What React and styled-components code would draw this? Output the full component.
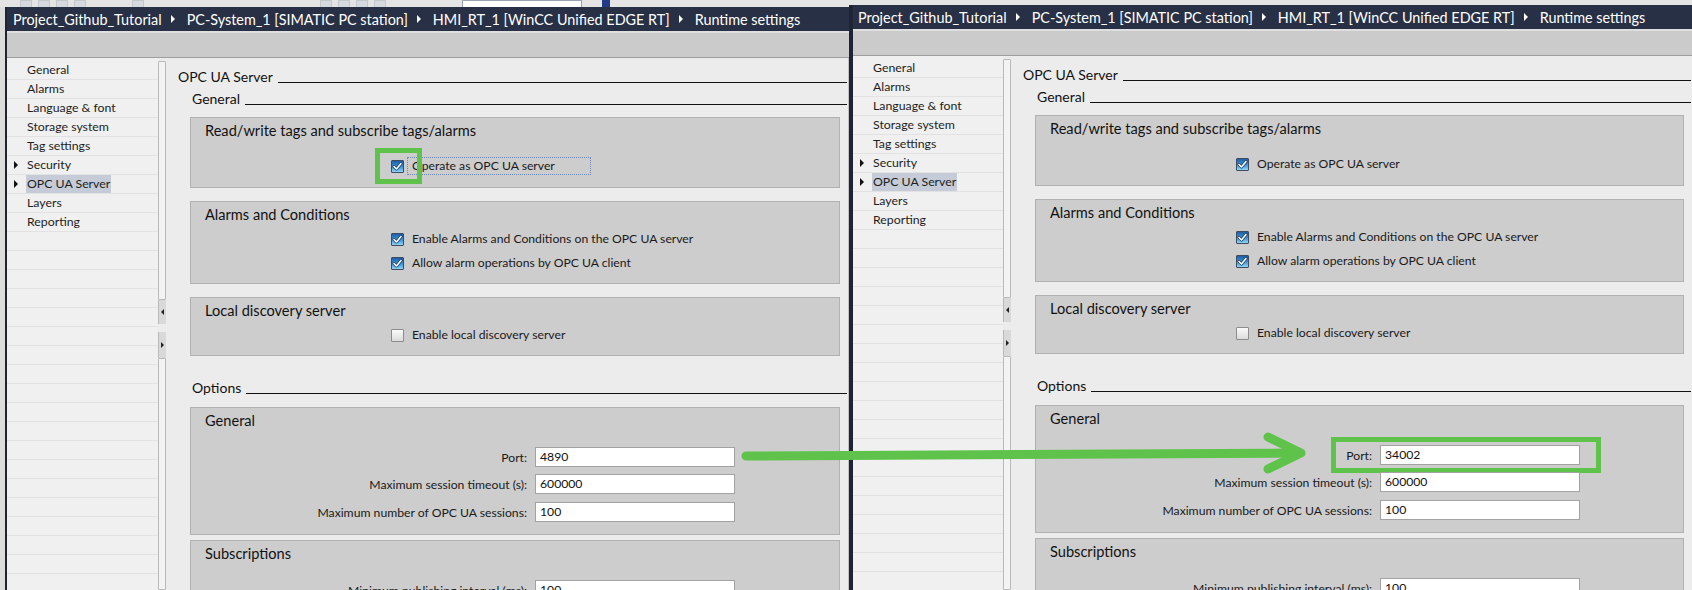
import React from "react";
import styled, { createGlobalStyle } from "styled-components";

const GlobalStyle = createGlobalStyle`
  html, body { margin: 0; padding: 0; }
  body { font-family: "Lato", "Noto Sans", sans-serif; background: #e2e2e2; }
`;

const FONT = `"Lato", "Noto Sans", sans-serif`;
const GREEN = "#5fc34b";

const Page = styled.div`
  position: relative;
  display: flex;
  width: 1692px;
  height: 590px;
  overflow: hidden;
  background: #dcdcdc;
  font-family: ${FONT};
`;

const Pane = styled.div`
  display: flex;
  flex-direction: column;
  width: ${(p) => (p.$w ? `${p.$w}px` : "auto")};
  flex: ${(p) => (p.$w ? "none" : "1")};
  min-width: 0;
`;

const TopStrip = styled.div`
  height: ${(p) => p.$h}px;
  background: #e4e4e4;
  display: flex;
  align-items: flex-end;
  gap: 6px;
  padding-left: ${(p) => p.$pl || 0}px;
  overflow: hidden;
`;

const ToolIcon = styled.span`
  display: block;
  width: ${(p) => p.$w || 12}px;
  height: ${(p) => p.$hh || 6}px;
  margin-left: ${(p) => p.$ml || 0}px;
  background: ${(p) => p.$bg || "#d6d9dd"};
  border: 1px solid ${(p) => p.$bd || "#c4c7cc"};
  border-bottom: none;
`;

const Window = styled.div`
  flex: 1;
  display: flex;
  flex-direction: column;
  min-height: 0;
  margin-left: ${(p) => p.$ml || 0}px;
  border-left: ${(p) => p.$bw}px solid #1e2434;
  background: #ececec;
`;

const Header = styled.div`
  height: 24px;
  background: #283046;
  color: #ffffff;
  font-size: 14.4px;
  display: flex;
  align-items: center;
  padding-left: ${(p) => p.$pl}px;
  white-space: nowrap;
  overflow: hidden;
`;

const CrumbArrow = styled.span`
  display: inline-block;
  width: 0;
  height: 0;
  border-top: 4px solid transparent;
  border-bottom: 4px solid transparent;
  border-left: 4px solid #ffffff;
  margin: 0 12px 0 9px;
`;

const Toolbar = styled.div`
  height: 24px;
  background: #cbcbcb;
  border-top: 2px solid #dfdfdf;
  border-bottom: 1px solid #9e9e9e;
`;

const Body = styled.div`
  flex: 1;
  display: flex;
  min-height: 0;
  overflow: hidden;
`;

const Sidebar = styled.div`
  width: ${(p) => p.$w}px;
  flex: none;
  background: #f0f0f0;
  padding-top: 3px;
  display: flex;
  flex-direction: column;
  overflow: hidden;
`;

const NavRow = styled.div`
  position: relative;
  flex: none;
  height: 18px;
  border-bottom: 1px solid #e2e2e2;
  display: flex;
  align-items: center;
  padding-left: 19px;
  font-size: 12.3px;
  color: #1e1e1e;
`;

const Expander = styled.span`
  position: absolute;
  left: 7px;
  top: 5px;
  width: 0;
  height: 0;
  border-top: 4px solid transparent;
  border-bottom: 4px solid transparent;
  border-left: 4px solid #111;
`;

const NavLabel = styled.span`
  padding: 1px 1px;
  line-height: 16px;
  background: ${(p) => (p.$selected ? "#c5cbd7" : "transparent")};
`;

const Splitter = styled.div`
  width: 8px;
  flex: none;
  display: flex;
  flex-direction: column;
  padding-top: 3px;
  background: #ececec;
`;

const SplitSeg = styled.div`
  flex: ${(p) => (p.$h ? "none" : "1")};
  height: ${(p) => (p.$h ? `${p.$h}px` : "auto")};
  background: #f3f3f3;
  border: 1px solid #b9b9b9;
  border-radius: 1px;
`;

const SplitHandle = styled.div`
  flex: none;
  height: ${(p) => p.$h}px;
  margin-top: ${(p) => p.$mt || 0}px;
  display: flex;
  align-items: center;
  justify-content: center;
  background: #d9d9d9;
  border-left: 1px solid #b9b9b9;
`;

const MiniArrow = styled.span`
  width: 0;
  height: 0;
  border-top: 3px solid transparent;
  border-bottom: 3px solid transparent;
  ${(p) =>
    p.$dir === "left"
      ? "border-right: 3px solid #222;"
      : "border-left: 3px solid #222;"}
`;

const Content = styled.div`
  flex: 1;
  min-width: 0;
  display: flex;
  flex-direction: column;
  padding: 10px 0 0 12px;
  overflow: hidden;
  border-right: ${(p) => (p.$edge ? "1px solid #c2c2c2" : "none")};
`;

const HeadingRow = styled.div`
  display: flex;
  flex: none;
  height: 18px;
  margin-top: ${(p) => p.$mt || 0}px;
  margin-left: ${(p) => p.$indent || 0}px;
  margin-right: 1px;
  font-size: 14px;
  line-height: 18px;
  color: #111;
  white-space: nowrap;
`;

const HeadingRule = styled.span`
  flex: 1;
  align-self: flex-start;
  height: 14px;
  margin-left: 5px;
  border-bottom: 1px solid #111;
`;

const Panel = styled.div`
  flex: none;
  margin: ${(p) => p.$mt}px 8px 0 12px;
  padding: 4px 0 ${(p) => p.$pb ?? 11}px 0;
  background: #cdcdcd;
  border: 1px solid #b1b1b1;
`;

const PanelTitle = styled.div`
  padding-left: 14px;
  font-size: 14.6px;
  line-height: 18px;
  color: #111111;
`;

const CheckRow = styled.div`
  position: relative;
  display: flex;
  align-items: center;
  gap: 8px;
  height: 18px;
  margin: ${(p) => p.$mt}px 0 0 200px;
  font-size: 12.2px;
  color: #1a1a1a;
`;

const Box = styled.span`
  position: relative;
  display: flex;
  align-items: center;
  justify-content: center;
  width: 13px;
  height: 13px;
  box-sizing: border-box;
  border: 1px solid ${(p) => (p.$checked ? "#3e4c60" : "#8c8c8c")};
  border-radius: 1px;
  background: ${(p) =>
    p.$checked
      ? "linear-gradient(#1f5fa8, #3d95d6 55%, #8fd6f6)"
      : "linear-gradient(#fafafa, #dcdcdc)"};
`;

const CheckLabel = styled.span`
  line-height: 16px;
  min-width: ${(p) => (p.$focus ? "178px" : "0")};
  outline: ${(p) => (p.$focus ? "1px dotted #6d86b8" : "none")};
  margin-left: ${(p) => (p.$focus ? "-4px" : "0")};
  padding-left: ${(p) => (p.$focus ? "4px" : "0")};
`;

const Highlight = styled.span`
  position: absolute;
  left: ${(p) => p.$l}px;
  top: ${(p) => p.$t}px;
  width: ${(p) => p.$w}px;
  height: ${(p) => p.$h}px;
  box-sizing: border-box;
  border: 5px solid ${GREEN};
  pointer-events: none;
`;

const FieldRow = styled.div`
  position: relative;
  display: grid;
  grid-template-columns: 336px 200px;
  column-gap: 8px;
  align-items: center;
  height: 20px;
  margin-top: ${(p) => p.$mt}px;
  font-size: 12.2px;
  color: #1a1a1a;
`;

const FieldLabel = styled.span`
  text-align: right;
  white-space: nowrap;
`;

const FieldInput = styled.div`
  height: 20px;
  box-sizing: border-box;
  border: 1px solid #a2a2a2;
  background: #ffffff;
  padding: 0 4px;
  line-height: 18px;
  font-size: 12.2px;
  color: #111;
`;

const Overlay = styled.svg`
  position: absolute;
  left: 0;
  top: 0;
  pointer-events: none;
`;

function Check({ checked }) {
  return (
    <Box $checked={checked}>
      {checked && (
        <svg width="11" height="11" viewBox="0 0 11 11">
          <path d="M2 5.5 L4.5 8 L9 2.5" fill="none" stroke="#173a66" strokeWidth="3" strokeLinecap="round" strokeLinejoin="round" />
          <path d="M2 5.5 L4.5 8 L9 2.5" fill="none" stroke="#ffffff" strokeWidth="1.6" strokeLinecap="round" strokeLinejoin="round" />
        </svg>
      )}
    </Box>
  );
}

const crumbs = [
  "Project_Github_Tutorial",
  "PC-System_1 [SIMATIC PC station]",
  "HMI_RT_1 [WinCC Unified EDGE RT]",
  "Runtime settings",
];

const navItems = [
  { label: "General" },
  { label: "Alarms" },
  { label: "Language & font" },
  { label: "Storage system" },
  { label: "Tag settings" },
  { label: "Security", expander: true },
  { label: "OPC UA Server", expander: true, selected: true },
  { label: "Layers" },
  { label: "Reporting" },
];

function SettingsWindow({ variant }) {
  const right = variant === "right";
  return (
    <Window $ml={right ? 0 : 5} $bw={right ? 4 : 2}>
      <Header $pl={right ? 5 : 6}>
        {crumbs.map((c, i) => (
          <React.Fragment key={c}>
            {i > 0 && <CrumbArrow />}
            <span>{c}</span>
          </React.Fragment>
        ))}
      </Header>
      <Toolbar />
      <Body>
        <Sidebar $w={right ? 150 : 151}>
          {navItems.map((n) => (
            <NavRow key={n.label}>
              {n.expander && <Expander />}
              <NavLabel $selected={n.selected}>{n.label}</NavLabel>
            </NavRow>
          ))}
          {Array.from({ length: 22 }).map((_, i) => (
            <NavRow key={"e" + i} />
          ))}
        </Sidebar>
        <Splitter>
          <SplitSeg $h={237} />
          <SplitHandle $h={24}>
            <MiniArrow $dir="left" />
          </SplitHandle>
          <SplitHandle $h={26} $mt={8}>
            <MiniArrow $dir="right" />
          </SplitHandle>
          <SplitSeg />
        </Splitter>
        <Content $edge={!right}>
          <HeadingRow>
            OPC UA Server
            <HeadingRule />
          </HeadingRow>
          <HeadingRow $mt={4} $indent={14}>
            General
            <HeadingRule />
          </HeadingRow>

          <Panel $mt={9} $pb={12}>
            <PanelTitle>Read/write tags and subscribe tags/alarms</PanelTitle>
            <CheckRow $mt={17}>
              <Check checked />
              <CheckLabel $focus={!right}>Operate as OPC UA server</CheckLabel>
              {!right && <Highlight $l={-16} $t={-9} $w={47} $h={36} />}
            </CheckRow>
          </Panel>

          <Panel $mt={13}>
            <PanelTitle>Alarms and Conditions</PanelTitle>
            <CheckRow $mt={6}>
              <Check checked />
              <CheckLabel>Enable Alarms and Conditions on the OPC UA server</CheckLabel>
            </CheckRow>
            <CheckRow $mt={6}>
              <Check checked />
              <CheckLabel>Allow alarm operations by OPC UA client</CheckLabel>
            </CheckRow>
          </Panel>

          <Panel $mt={13}>
            <PanelTitle>Local discovery server</PanelTitle>
            <CheckRow $mt={6}>
              <Check />
              <CheckLabel>Enable local discovery server</CheckLabel>
            </CheckRow>
          </Panel>

          <HeadingRow $mt={23} $indent={14}>
            Options
            <HeadingRule />
          </HeadingRow>

          <Panel $mt={10} $pb={12}>
            <PanelTitle>General</PanelTitle>
            <FieldRow $mt={17}>
              <FieldLabel>Port:</FieldLabel>
              <FieldInput>{right ? "34002" : "4890"}</FieldInput>
              {right && <Highlight $l={295} $t={-8} $w={270} $h={36} />}
            </FieldRow>
            <FieldRow $mt={7}>
              <FieldLabel>Maximum session timeout (s):</FieldLabel>
              <FieldInput>600000</FieldInput>
            </FieldRow>
            <FieldRow $mt={8}>
              <FieldLabel>Maximum number of OPC UA sessions:</FieldLabel>
              <FieldInput>100</FieldInput>
            </FieldRow>
          </Panel>

          <Panel $mt={5}>
            <PanelTitle>Subscriptions</PanelTitle>
            <FieldRow $mt={17}>
              <FieldLabel>Minimum publishing interval (ms):</FieldLabel>
              <FieldInput>100</FieldInput>
            </FieldRow>
          </Panel>
        </Content>
      </Body>
    </Window>
  );
}

export default function App() {
  return (
    <>
      <GlobalStyle />
      <Page>
        <Pane $w={849}>
          <TopStrip $h={7} $pl={20}>
            <ToolIcon $w={10} />
            <ToolIcon $w={10} />
            <ToolIcon $w={10} />
            <ToolIcon $w={10} />
            <ToolIcon $w={10} $ml={40} />
            <ToolIcon $w={10} $ml={170} />
            <ToolIcon $w={10} />
            <ToolIcon $w={10} />
            <ToolIcon $w={10} />
            <ToolIcon $w={118} $ml={70} $bg="#ffffff" $bd="#9aa3b0" />
            <ToolIcon $w={6} $ml={14} $bg="#233a8a" $bd="#233a8a" />
          </TopStrip>
          <SettingsWindow variant="left" />
        </Pane>
        <Pane>
          <TopStrip $h={5} />
          <SettingsWindow variant="right" />
        </Pane>
        <Overlay width="1692" height="590" viewBox="0 0 1692 590">
          <path d="M746 456 L1296 453" stroke={GREEN} strokeWidth="9" strokeLinecap="round" fill="none" />
          <path d="M1268 437 L1301 453 L1268 469" stroke={GREEN} strokeWidth="9" strokeLinecap="round" strokeLinejoin="round" fill="none" />
        </Overlay>
      </Page>
    </>
  );
}
